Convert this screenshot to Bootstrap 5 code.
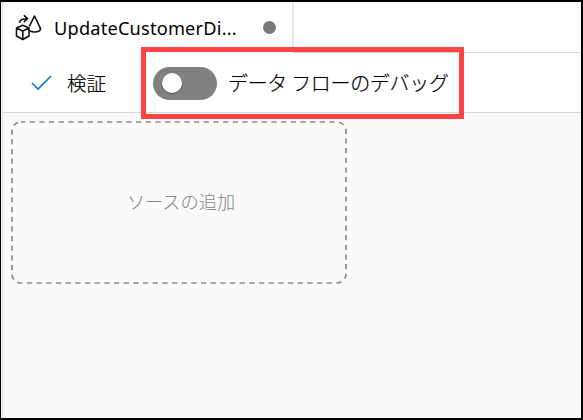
<!DOCTYPE html>
<html lang="ja">
<head>
<meta charset="utf-8">
<meta name="viewport" content="width=device-width, initial-scale=1">
<title>UpdateCustomerDi...</title>
<link href="https://cdn.jsdelivr.net/npm/bootstrap@5.3.0/dist/css/bootstrap.min.css" rel="stylesheet">
<style>
body{font-family:"Noto Sans","Noto Sans CJK JP",sans-serif;color:#000;width:583px;height:420px}
.frame{width:583px;height:420px;border:2px solid #000;border-left-width:1px;padding-left:1px;background:#fff}
.pane{border-left:1px solid #e1dfdd}
.tabs{height:51px}
.doc-tab{width:291px;padding-left:12px;border-right:2px solid #e8e8e8}
.tab-rest{border-bottom:1px solid #d6d6d6}
.doc-title{font-size:18.2px;letter-spacing:.2px;line-height:24px;width:185px;margin-left:12px;white-space:nowrap}
.dirty{width:13px;height:13px;background:#7a7a7a;margin-left:24px}
.tools{height:60px;border-bottom:1px solid #d6d6d6}
.validate{width:138px;padding-left:27px}
.jp{font-family:"Noto Sans CJK JP",sans-serif;font-weight:300;white-space:nowrap}
.validate .jp{font-size:19.5px;margin-left:15px;-webkit-text-stroke:.2px #000}
.debug{width:323px;height:72px;margin-top:-6px;border:5px solid #fe4444;padding-left:7px;z-index:2}
.switch{width:64px;height:33px;background:#808080;padding-left:9px}
.knob{width:20px;height:20px;background:#fff;box-shadow:0 1px 2px #0005}
.debug .jp{font-size:20px;margin-left:11px;letter-spacing:-.32px;-webkit-text-stroke:.2px #000}
.canvas{background:#fafafa;padding:8px 0 0 8px}
.source{width:336px;height:163px}
.source .jp{font-size:18.2px;color:#858585;padding-left:4px;margin-top:-2px}
</style>
<script src="https://cdn.jsdelivr.net/npm/bootstrap@5.3.0/dist/js/bootstrap.bundle.min.js"></script>
</head>
<body class="m-0 overflow-hidden">
<div class="frame">
<div class="pane d-flex flex-column h-100">
  <div class="tabs d-flex flex-shrink-0">
    <div class="doc-tab d-flex align-items-center flex-shrink-0">
      <svg width="27" height="28" viewBox="0 0 27 28" fill="none" stroke="#111" stroke-width="1.6" stroke-linejoin="round" stroke-linecap="round">
        <path d="M1.500 14 7.800 11.300l6.200 2.700v8L7.800 25.500 1.500 22zM1.500 14l6.300 3 6.200-3M7.800 17v8.500"/>
        <path d="M4.600 8.300C4.900 5.800 7.300 4.700 12 4.700M9.300 1.700l3.200 3-3.200 3"/>
        <path d="M14.500 11.800 19.500 2l5.900 12.300c.8 3.800-6.700 4.600-10.300 2.700"/>
      </svg>
      <div class="doc-title">UpdateCustomerDi...</div>
      <div class="dirty rounded-circle"></div>
    </div>
    <div class="tab-rest flex-grow-1"></div>
  </div>
  <div class="tools d-flex flex-shrink-0">
    <div class="validate d-flex align-items-center flex-shrink-0">
      <svg width="22" height="18" viewBox="0 0 22 18" fill="none" stroke="#1474cf" stroke-width="1.6"><path d="m2 9 6 6L21 2"/></svg>
      <span class="jp">検証</span>
    </div>
    <div class="debug d-flex align-items-center position-relative flex-shrink-0">
      <div class="switch rounded-pill d-flex align-items-center flex-shrink-0"><div class="knob rounded-circle"></div></div>
      <span class="jp">データ フローのデバッグ</span>
    </div>
  </div>
  <div class="canvas flex-grow-1">
    <div class="source position-relative d-flex align-items-center justify-content-center">
      <svg class="position-absolute top-0 start-0" width="336" height="163" fill="none" stroke="#8c8c8c" stroke-width="1.7"><rect x="1" y="1" width="334" height="161" rx="9" stroke-dasharray="5.200 4.470" stroke-dashoffset="1"/></svg>
      <span class="jp">ソースの追加</span>
    </div>
  </div>
</div>
</div>
</body>
</html>
